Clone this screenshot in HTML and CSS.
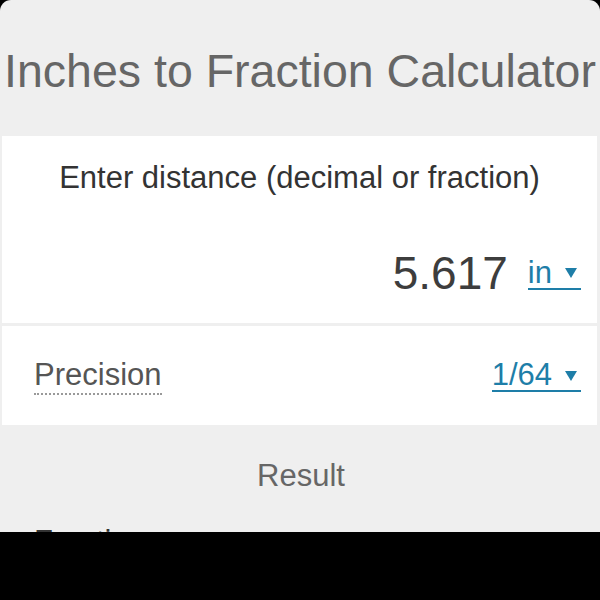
FILE: index.html
```html
<!DOCTYPE html>
<html>
<head>
<meta charset="utf-8">
<link rel="stylesheet" href="styles.css">
</head>
<body>
<div class="card">
  <h1 class="title">Inches to Fraction Calculator</h1>
  <section class="panel panel-input">
    <div class="label-center">Enter distance (decimal or fraction)</div>
    <div class="value-row">
      <span class="value">5.617</span>
      <span class="unit"><span class="unit-text">in</span><span class="tri"></span></span>
    </div>
  </section>
  <section class="panel panel-precision">
    <span class="field-label">Precision</span>
    <span class="unit"><span class="unit-text">1/64</span><span class="tri"></span></span>
  </section>
  <section class="result">
    <div class="result-title">Result</div>
    <div class="result-label">Fraction:</div>
  </section>
</div>
</body>
</html>
```
FILE: styles.css
```css
html, body {
  margin: 0;
  padding: 0;
  background: #000;
}
body {
  width: 600px;
  height: 600px;
  font-family: "Liberation Sans", Arial, sans-serif;
}
.card {
  height: 532px;
  background: #efefef;
  border-radius: 11px 11px 0 0;
  overflow: hidden;
}
.title {
  margin: 0;
  padding: 43px 0 37px;
  font-size: 46.5px;
  line-height: 56px;
  font-weight: normal;
  color: #666;
  text-align: center;
  white-space: nowrap;
}
.panel {
  background: #fff;
  margin: 0 3px 0 2px;
}
.panel-input {
  padding: 22px 16px 22px 32px;
}
.label-center {
  font-size: 31px;
  line-height: 40px;
  color: #333;
  text-align: center;
  margin-left: -16px;
  white-space: nowrap;
}
.value-row {
  margin-top: 47px;
  display: flex;
  justify-content: flex-end;
  align-items: center;
  gap: 20px;
  height: 56px;
}
.value {
  font-size: 46px;
  line-height: 56px;
  color: #3d3d3d;
}
.unit {
  display: inline-flex;
  align-items: center;
  gap: 13px;
  padding-right: 4px;
  border-bottom: 2px solid #1e7ea8;
  color: #1e7ea8;
  font-size: 31px;
  line-height: 31px;
}
.value-row .unit {
  margin-top: 0;
}
.tri {
  width: 0;
  height: 0;
  border-left: 6px solid transparent;
  border-right: 6px solid transparent;
  border-top: 10px solid #1e7ea8;
  margin-top: 2px;
}
.panel-precision {
  margin-top: 3px;
  height: 99px;
  padding: 0 16px 0 32px;
  box-sizing: border-box;
  display: flex;
  justify-content: space-between;
  align-items: center;
}
.field-label {
  font-size: 31px;
  line-height: 34px;
  color: #555;
  border-bottom: 2px dotted #999;
  padding-bottom: 1px;
  margin-top: 1px;
}
.panel-precision .unit {
  margin-top: 0;
}
.result {
  padding: 31px 32px 0 34px;
}
.result-title {
  font-size: 31px;
  line-height: 40px;
  color: #666;
  text-align: center;
}
.result-label {
  margin-top: 26px;
  font-size: 31px;
  line-height: 40px;
  color: #333;
}
```
